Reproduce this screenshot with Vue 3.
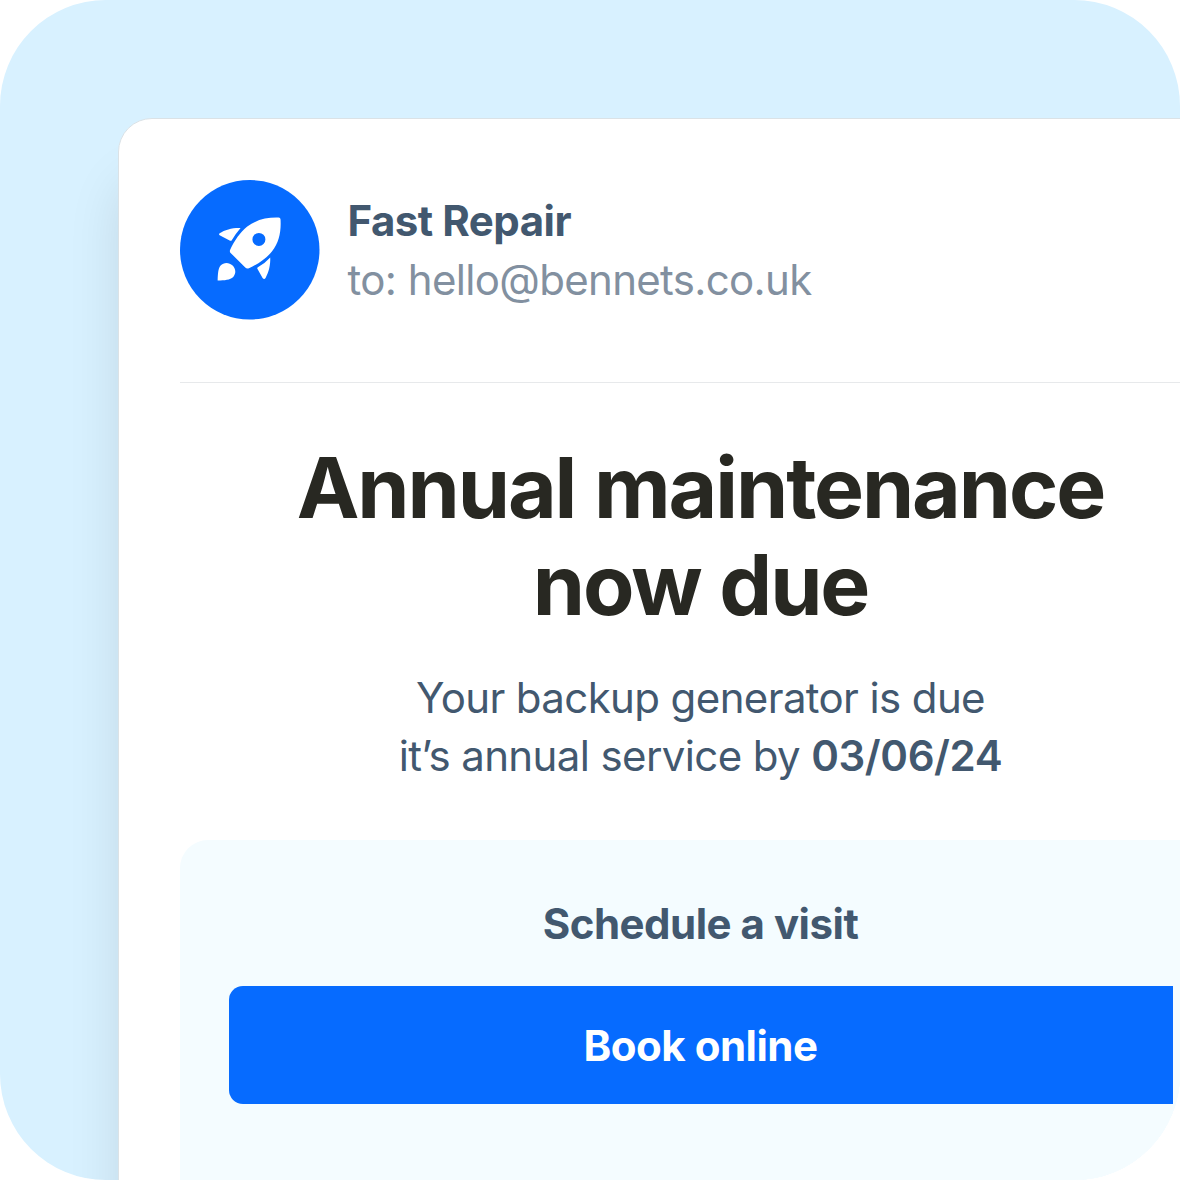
<template>
  <div class="scene">
    <article class="email">
      <header class="sender">
        <svg class="avatar" viewBox="30 30 419 419" aria-hidden="true">
          <circle cx="239.5" cy="239.5" r="209.5" fill="#066bff" />
          <g fill="#fff">
            <path fill-rule="evenodd" d="M326 143Q332 143 332 149C334 184 328 218 306 245C290 265 264 283 237 295Q231 298 226 293L182 249Q178 245 181 239C193 213 211 187 232 170C259 149 292 142 326 143ZM267 189A19.5 19.5 0 1 0 267 228A19.5 19.5 0 1 0 267 189Z" />
            <path d="M149 190C165 179 188 173 212 174Q198 190 186 210Q184 214 179 212L149 196Q145 193 149 190Z" />
            <path d="M301 263C302 284 297 307 287 324Q283 330 278 324L262 296Q261 293 265 291Q285 281 301 263Z" />
            <path d="M143 332C144 312 144 297 152 287C161 277 177 276 188 287C198 297 199 311 190 321C180 330 165 331 143 332Z" />
          </g>
        </svg>
        <div class="sender-text">
          <strong class="sender-name">{{ mail.from }}</strong>
          <span class="sender-to">to: {{ mail.to }}</span>
        </div>
      </header>

      <h1>Annual maintenance<br />now due</h1>

      <p class="message">
        Your backup generator is due<br />it’s annual service by <strong>{{ mail.dueDate }}</strong>
      </p>

      <section class="booking">
        <h2>Schedule a visit</h2>
        <button type="button" class="btn-book">Book online</button>
      </section>
    </article>
  </div>
</template>

<script setup>
const mail = {
  from: 'Fast Repair',
  to: 'hello@bennets.co.uk',
  dueDate: '03/06/24'
};
</script>

<style>
body { background: #fff; overflow: hidden; }
</style>

<style scoped>
.scene { box-sizing: border-box; width: 1180px; height: 1180px; padding: 118px 0 0 118px; overflow: hidden; border-radius: 106px; background: #d8f1ff; font-family: Inter, "Liberation Sans", sans-serif; color: #42586f; }
.email { box-sizing: border-box; width: 1165px; height: 1300px; padding: 61px; border: 1px solid #dbe2e6; border-radius: 34px; background: #fff; box-shadow: 0 60px 52px rgba(0, 10, 0, 0.1); }

.sender { display: flex; align-items: flex-start; gap: 28px; box-sizing: border-box; height: 203px; border-bottom: 1.5px solid #e7e9eb; }
.avatar { flex: none; width: 139.5px; height: 139.5px; overflow: visible; }
.sender-text { display: flex; flex-direction: column; padding-top: 12px; font-size: 42px; line-height: 58px; white-space: nowrap; }
.sender-name { font-weight: 700; letter-spacing: -0.5px; }
.sender-to { margin-top: 1px; color: #8290a0; letter-spacing: -0.67px; word-spacing: 0.5px; }

h1 { margin: 56px 0 0; font-size: 84px; font-weight: 700; line-height: 97px; letter-spacing: -2.1px; word-spacing: 1px; text-align: center; color: #282822; }
.message { margin: 36px 0 0; font-size: 42px; line-height: 58px; letter-spacing: -0.62px; text-align: center; }
.message strong { font-weight: 600; letter-spacing: -0.4px; }

.booking { height: 440px; margin-top: 55px; padding: 55px 48.5px; border-radius: 28px; background: #f4fcff; }
h2 { margin: 0; font-size: 42px; font-weight: 700; line-height: 58px; letter-spacing: -0.5px; text-align: center; }
.btn-book { display: block; width: 944px; height: 118px; margin-top: 33px; padding: 1px 0 0; border: none; border-radius: 14px 0 0 14px; background: #066bff; color: #fff; font-family: inherit; font-size: 42px; font-weight: 700; letter-spacing: -0.5px; cursor: pointer; }
</style>
